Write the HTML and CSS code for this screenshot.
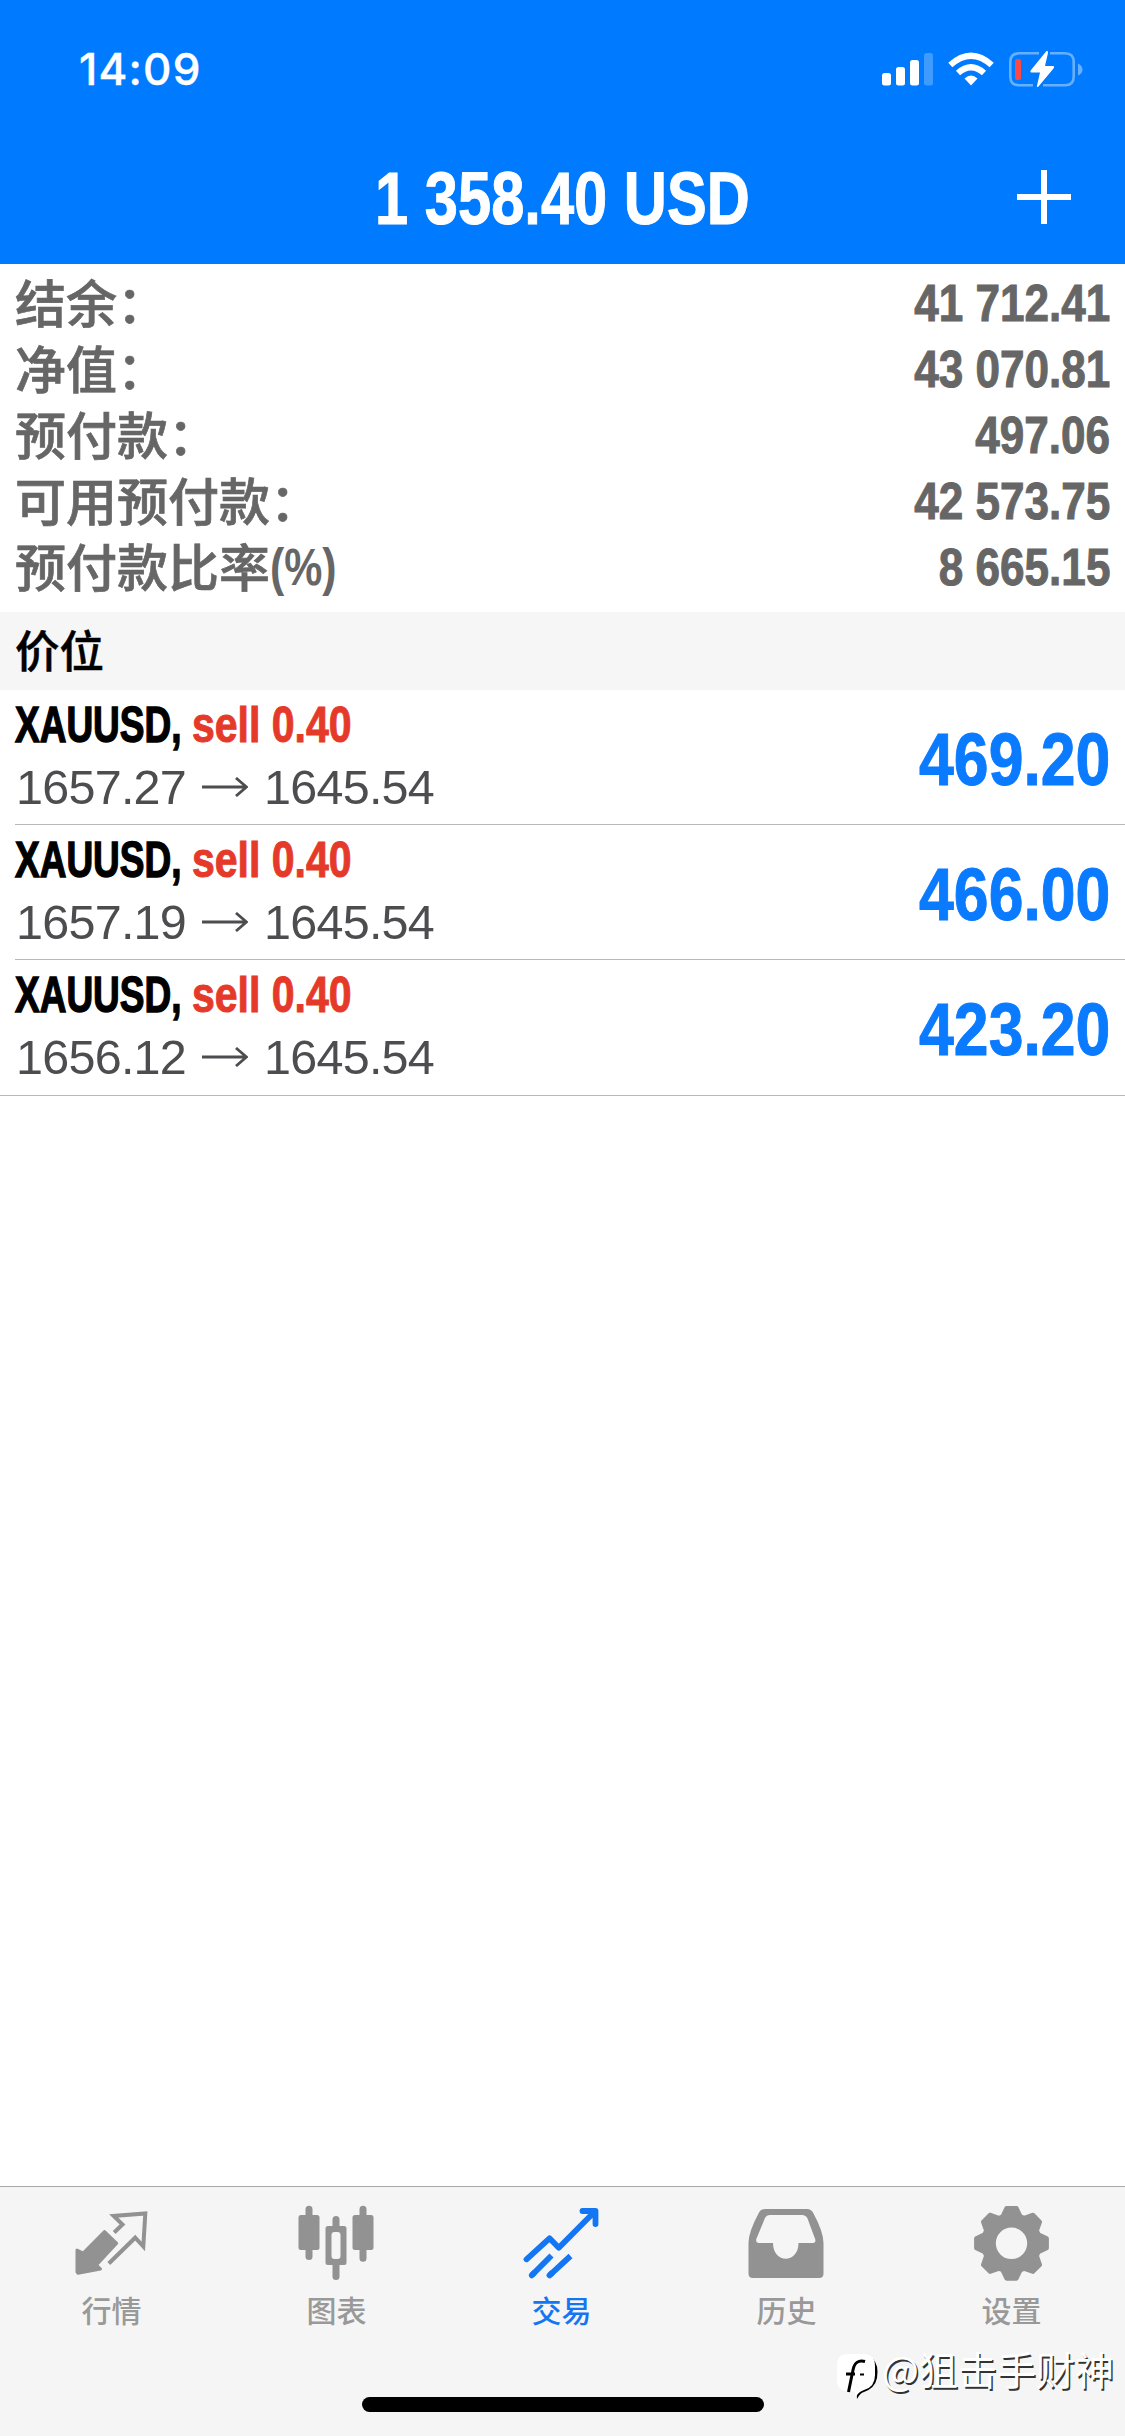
FILE: index.html
```html
<!DOCTYPE html>
<html lang="zh-CN">
<head>
<meta charset="utf-8">
<title>交易</title>
<link rel="stylesheet" href="styles.css">
</head>
<body>
<div class="app">
  <header class="header">
    <div class="status">
      <span class="time">14:09</span>
      <svg class="status-icons" width="204" height="40" viewBox="880 49 204 40">
        <g fill="#fff">
          <rect x="882" y="73" width="9" height="12.500" rx="2.500"/>
          <rect x="896" y="67" width="9" height="18.500" rx="2.500"/>
          <rect x="910" y="60" width="9" height="25.500" rx="2.500"/>
          <rect x="924" y="53" width="9" height="32.500" rx="2.500" opacity=".25"/>
          <path d="M971 85.500 L964.500 78.500 Q971 72.500 977.500 78.500Z"/>
        </g>
        <g fill="none" stroke="#fff" stroke-width="6.200">
          <path d="M950.300 65 Q971 46.500 991.700 65"/>
          <path d="M958 73 Q971 61.500 984 73"/>
        </g>
        <path fill="none" stroke="#66b0ff" stroke-width="2.600" d="M1039 53.300 H1019 Q1010.300 53.300 1010.300 62 V76.500 Q1010.300 85.200 1019 85.200 H1033 M1050 53.300 H1065 Q1073.700 53.300 1073.700 62 V76.500 Q1073.700 85.200 1065 85.200 H1043"/>
        <path fill="#66b0ff" d="M1078 63.500 Q1082.500 65.500 1082.500 69.500 T1078 75.500Z"/>
        <rect x="1015" y="59" width="6" height="21" rx="2" fill="#fb4a45"/>
        <path fill="#fff" d="M1046.500 51 Q1048.500 50.500 1048 53 L1045 66 H1053 Q1055 66.500 1053.500 68.500 L1038.500 86.500 Q1036.500 88 1037 85.500 L1040 72.500 H1031.500 Q1029.500 72 1031 70Z"/>
      </svg>
    </div>
    <div class="nav">
      <h1 class="title"><span class="cond">1 358.40 USD</span></h1>
      <svg class="plus" width="56" height="56" viewBox="0 0 56 56"><path d="M28 1V55M1 28H55" stroke="#fff" stroke-width="6"/></svg>
    </div>
  </header>

  <section class="summary">
    <div class="sum-row"><span class="label">结余：</span><span class="cond val">41 712.41</span></div>
    <div class="sum-row"><span class="label">净值：</span><span class="cond val">43 070.81</span></div>
    <div class="sum-row"><span class="label">预付款：</span><span class="cond val">497.06</span></div>
    <div class="sum-row"><span class="label">可用预付款：</span><span class="cond val">42 573.75</span></div>
    <div class="sum-row"><span class="label">预付款比率<span class="cond unit">(%)</span></span><span class="cond val">8 665.15</span></div>
  </section>

  <h2 class="section">价位</h2>

  <ul class="positions">
    <li class="position">
      <div class="deal">
        <div class="line1"><span class="cond symbol">XAUUSD,</span><span class="cond side">sell 0.40</span></div>
        <div class="line2"><span>1657.27</span><svg width="46" height="20" viewBox="0 0 46 20"><path d="M0 10H44M34 1L44.500 10L34 19"/></svg><span>1645.54</span></div>
      </div>
      <span class="cond profit">469.20</span>
    </li>
    <li class="position">
      <div class="deal">
        <div class="line1"><span class="cond symbol">XAUUSD,</span><span class="cond side">sell 0.40</span></div>
        <div class="line2"><span>1657.19</span><svg width="46" height="20" viewBox="0 0 46 20"><path d="M0 10H44M34 1L44.500 10L34 19"/></svg><span>1645.54</span></div>
      </div>
      <span class="cond profit">466.00</span>
    </li>
    <li class="position">
      <div class="deal">
        <div class="line1"><span class="cond symbol">XAUUSD,</span><span class="cond side">sell 0.40</span></div>
        <div class="line2"><span>1656.12</span><svg width="46" height="20" viewBox="0 0 46 20"><path d="M0 10H44M34 1L44.500 10L34 19"/></svg><span>1645.54</span></div>
      </div>
      <span class="cond profit">423.20</span>
    </li>
  </ul>

  <nav class="tabs">
    <a class="tab">
      <svg width="80" height="80" viewBox="0 0 80 80">
        <path fill="currentColor" stroke="currentColor" stroke-width="3" stroke-linejoin="round" d="M5 46 L11.200 49 L32.500 27.500 L44.700 39.300 L24.500 61 L28.500 65 L6 69.200 L5 68Z"/>
        <path fill="none" stroke="currentColor" stroke-width="4" d="M42.200 28.500 L50.500 20.500 L41.700 12 L73.300 9.500 L71.300 42.500 L63.200 33.700 L36.800 59.500"/>
      </svg>
      <span>行情</span>
    </a>
    <a class="tab">
      <svg width="80" height="80" viewBox="0 0 80 80" fill="currentColor">
        <rect x="1.500" y="11" width="21" height="35" rx="2.500"/><rect x="8.500" y="1.700" width="7" height="54.300" rx="3.500"/>
        <rect x="55.500" y="11" width="21" height="35" rx="2.500"/><rect x="62.500" y="1.700" width="7" height="56" rx="3.500"/>
        <rect x="28.500" y="22" width="21" height="39" rx="2.500"/><rect x="35.500" y="12" width="7" height="64" rx="3.500"/>
        <rect x="34.500" y="28" width="9" height="27" rx="3" fill="#f5f5f5"/>
      </svg>
      <span>图表</span>
    </a>
    <a class="tab active">
      <svg width="80" height="80" viewBox="0 0 80 80" fill="none" stroke="currentColor" stroke-width="5.800" stroke-linecap="round" stroke-linejoin="round">
        <path d="M4.500 55.300 L27.500 34.300 L36.800 43.700 L73 7.300M60.500 7H73.500V20"/>
        <path stroke-linecap="butt" d="M9.800 71.300 L29.500 51.500M27.500 71.300 L48.500 52"/>
        <path d="M9.800 71.300L12 69M27.500 71.300L30 69"/>
      </svg>
      <span>交易</span>
    </a>
    <a class="tab">
      <svg width="80" height="80" viewBox="0 0 80 80">
        <path fill="currentColor" fill-rule="evenodd" d="M18 5 H60 Q64.500 5 66.500 9.500 Q76.500 28 76.500 39 V69.500 Q76.500 74 72 74 H6 Q1.500 74 1.500 69.500 V39 Q1.500 28 11.500 9.500 Q13.500 5 18 5Z M23 11 Q19.500 11 18 14 L9.300 35 Q8.500 39 11.500 39 H26 C26 60 51.500 60 51.500 39 H66.500 Q69 39 68.300 35.500 L60.500 14.500 Q59 11 55 11Z"/>
      </svg>
      <span>历史</span>
    </a>
    <a class="tab">
      <svg width="80" height="80" viewBox="0 0 80 80">
        <g transform="translate(39.500 39.300)" fill="currentColor">
          <circle r="23" fill="none" stroke="currentColor" stroke-width="14.600"/>
          <g stroke="currentColor" stroke-width="4" stroke-linejoin="round">
            <path id="tooth" d="M-9 -27 L-5 -35.400 H5 L9 -27Z"/>
            <use href="#tooth" transform="rotate(45)"/><use href="#tooth" transform="rotate(90)"/><use href="#tooth" transform="rotate(135)"/>
            <use href="#tooth" transform="rotate(180)"/><use href="#tooth" transform="rotate(225)"/><use href="#tooth" transform="rotate(270)"/><use href="#tooth" transform="rotate(315)"/>
          </g>
        </g>
      </svg>
      <span>设置</span>
    </a>
    <div class="home"></div>
    <div class="watermark">
      <svg width="42" height="48" viewBox="0 0 42 48">
        <path fill="#000" d="M36 6 Q42 12 40 25 Q38 35 27 39 Q23 40 20 46 Q18 38 26 35Z"/>
        <path fill="#fff" d="M11 1 H26 Q38 1 38 13 V22 Q38 34 27 37 Q21 39 19 44 L17 38 H11 Q0 38 0 27 V12 Q0 1 11 1Z"/>
        <path fill="none" stroke="#000" stroke-width="3" d="M28 8.500 Q18 6 16 17 L11.500 39M9 21H18"/>
        <path fill="none" stroke="#000" stroke-width="2" d="M23 21.500H27"/>
      </svg>
      <span>@狙击手财神</span>
    </div>
  </nav>
</div>
</body>
</html>
```
FILE: styles.css
```css
* { box-sizing: border-box; margin: 0; padding: 0; }
body {
  width: 1125px;
  height: 2436px;
  background: #fff;
  font-family: "Liberation Sans", "Noto Sans CJK SC", sans-serif;
}
.app { display: flex; flex-direction: column; height: 2436px; overflow: hidden; }
.cond { display: inline-block; font-family: "Liberation Sans", sans-serif; font-weight: 700; white-space: nowrap; -webkit-text-stroke: 1px currentColor; }

.header { height: 264px; background: #007aff; color: #fff; }
.status { height: 137px; padding: 0 41px 0 79px; display: flex; align-items: center; justify-content: space-between; }
.time { font: 500 44px/50px Inter, sans-serif; letter-spacing: 1.200px; -webkit-text-stroke: .4px #fff; }
.nav { height: 123px; display: grid; grid-template-columns: 1fr auto 1fr; align-items: center; padding: 0 53px; }
.title { grid-column: 2; font-size: 74px; line-height: 123px; height: 123px; }
.title .cond { transform: scaleX(.806); }
.plus { justify-self: end; margin-top: -3px; }

.summary { height: 348px; padding: 6px 15px 0 15px; color: #666; }
.sum-row { height: 66px; display: flex; justify-content: space-between; align-items: center; font: 500 51px/66px "Noto Sans CJK SC", sans-serif; white-space: nowrap; }
.label { height: 66px; line-height: 62px; -webkit-text-stroke: .7px currentColor; }
.val { font-size: 52px; line-height: 67px; transform: scaleX(.848); transform-origin: right; }
.unit { font-size: 51px; line-height: 58px; transform: scaleX(.84) translateY(-2px); transform-origin: left; -webkit-text-stroke: 0; }

.section { height: 78px; padding-left: 15px; background: #f6f6f6; color: #000; font: 500 44.500px/74px "Noto Sans CJK SC", sans-serif; -webkit-text-stroke: .5px #000; }

.positions { list-style: none; flex: 1; }
.position { position: relative; height: 135px; padding: 0 15px; display: flex; align-items: center; justify-content: space-between; }
.position::after { content: ""; position: absolute; left: 15px; right: 0; bottom: 0; height: 1px; background: #b9b9bc; }
.position:last-child { height: 136px; }
.position:last-child::after { left: 0; }
.deal { display: flex; flex-direction: column; align-self: flex-start; padding-top: 5px; }
.line1 { height: 60px; display: flex; font-size: 50px; line-height: 60px; }
.symbol { width: 177px; transform: scaleX(.74); transform-origin: left; color: #000; -webkit-text-stroke-width: 1.400px; }
.side { color: #e53a2a; transform: scaleX(.82); transform-origin: left; }
.line2 { height: 64px; display: flex; align-items: center; font-size: 48.500px; line-height: 64px; letter-spacing: -.75px; color: #4d4d50; }
.line2 span:first-child { width: 187px; padding-left: 1px; }
.line2 svg { margin-right: 16px; fill: none; stroke: #4d4d50; stroke-width: 2.800; }
.profit { font-size: 74px; padding-top: 3px; color: #0a7aff; transform: scaleX(.845); transform-origin: right; }

.tabs { position: relative; height: 250px; padding-top: 17px; background: #f5f5f5; border-top: 1px solid #a8a8a8; display: grid; grid-template-columns: repeat(5, 225px); align-items: start; }
.tab { display: flex; flex-direction: column; align-items: center; color: #929292; font: 500 30px/44px "Noto Sans CJK SC", sans-serif; }
.tab svg { display: block; margin-left: -2px; }
.tab span { margin-top: 3px; margin-left: -2px; color: #999; }
.tab.active, .tab.active span { color: #1476f2; }
.home { position: absolute; left: 362px; top: 210px; width: 402px; height: 15px; border-radius: 8px; background: #000; }
.watermark { position: absolute; left: 837px; top: 166px; display: flex; align-items: flex-start; color: #fff; font: 400 39px/44px "Noto Sans CJK SC", sans-serif; text-shadow: 1.500px 1.500px 0 #333; white-space: nowrap; }
.watermark span { margin-left: 3px; margin-top: -7px; }
```
